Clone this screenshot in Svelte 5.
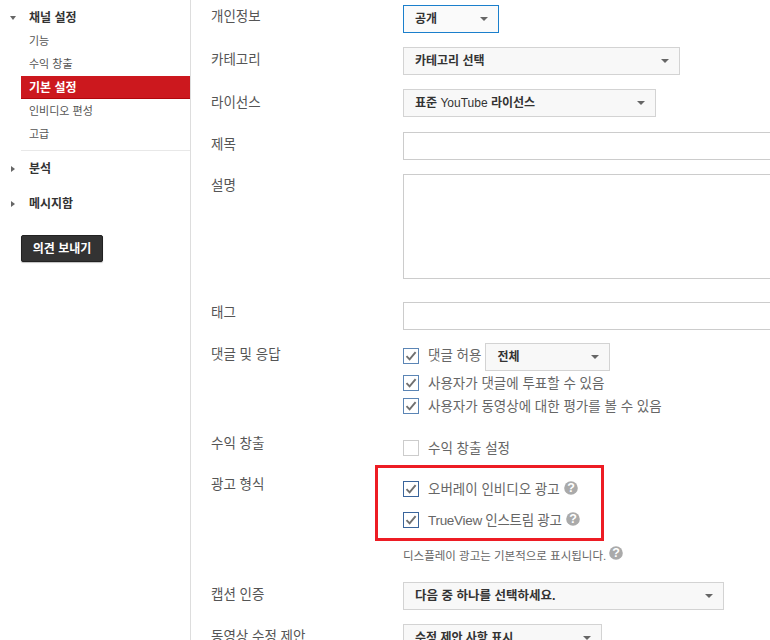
<script>
  const channelItems = [
    { label: "기능" },
    { label: "수익 창출" },
    { label: "기본 설정", active: true },
    { label: "인비디오 편성" },
    { label: "고급" }
  ];
  const voteOptions = [
    "사용자가 댓글에 투표할 수 있음",
    "사용자가 동영상에 대한 평가를 볼 수 있음"
  ];
</script>

{#snippet check(on, extra = "")}
  <span class="box {extra}" class:on>
    {#if on}
      <svg viewBox="0 0 16 16" width="16" height="16"><path d="M3.5 8.2 6.6 11.4 12.6 4.2" fill="none" stroke="#707070" stroke-width="1.9" /></svg>
    {/if}
  </span>
{/snippet}

{#snippet help()}
  <svg class="help" viewBox="0 0 14 14" width="14" height="14">
    <circle cx="7" cy="7" r="6.8" fill="#aaa" />
    <text x="7" y="11.4" text-anchor="middle">?</text>
  </svg>
{/snippet}

<div class="page">
  <aside class="side">
    <div class="head first"><i class="tri down"></i>채널 설정</div>
    <ul>
      {#each channelItems as item}
        <li class:active={item.active}>{item.label}</li>
      {/each}
    </ul>
    <div class="head sep"><i class="tri"></i>분석</div>
    <div class="head msg"><i class="tri"></i>메시지함</div>
    <button class="feedback">의견 보내기</button>
  </aside>

  <main class="form">
    <div class="row r-privacy">
      <div class="label">개인정보</div>
      <div class="select focus w-privacy"><b>공개</b><i class="caret"></i></div>
    </div>
    <div class="row r-cat">
      <div class="label">카테고리</div>
      <div class="select w-cat"><b>카테고리 선택</b><i class="caret"></i></div>
    </div>
    <div class="row r-lic">
      <div class="label">라이선스</div>
      <div class="select w-lic"><b>표준 <span class="yt">YouTube</span> 라이선스</b><i class="caret"></i></div>
    </div>
    <div class="row r-title">
      <div class="label">제목</div>
      <div class="input"></div>
    </div>
    <div class="row r-desc">
      <div class="label">설명</div>
      <div class="input area"></div>
    </div>
    <div class="row r-tag">
      <div class="label">태그</div>
      <div class="input"></div>
    </div>
    <div class="row r-comments">
      <div class="label">댓글 및 응답</div>
      <div class="stack">
        <div class="opt allow">
          {@render check(true)}
          <span>댓글 허용</span>
          <div class="select w-all"><b>전체</b><i class="caret"></i></div>
        </div>
        {#each voteOptions as text}
          <div class="opt vote">{@render check(true)}<span>{text}</span></div>
        {/each}
      </div>
    </div>
    <div class="row r-money">
      <div class="label">수익 창출</div>
      <div class="opt">{@render check(false)}<span>수익 창출 설정</span></div>
    </div>
    <div class="row r-ads">
      <div class="label">광고 형식</div>
      <div class="stack">
        <div class="opt ad">{@render check(true, "strong")}<span>오버레이 인비디오 광고</span>{@render help()}</div>
        <div class="opt ad second">{@render check(true, "strong")}<span>TrueView 인스트림 광고</span>{@render help()}</div>
        <div class="note">디스플레이 광고는 기본적으로 표시됩니다. {@render help()}</div>
      </div>
      <div class="redbox"></div>
    </div>
    <div class="row r-cap">
      <div class="label">캡션 인증</div>
      <div class="select w-cap"><b>다음 중 하나를 선택하세요.</b><i class="caret"></i></div>
    </div>
    <div class="row r-edit">
      <div class="label">동영상 수정 제안</div>
      <div class="select w-edit"><b>수정 제안 사항 표시</b><i class="caret"></i></div>
    </div>
  </main>
</div>

<style>
  :global(body) {
    margin: 0;
    background: #fff;
    overflow: hidden;
  }

  .page {
    display: flex;
    width: 770px;
    height: 640px;
    overflow: hidden;
    font-family: "Liberation Sans", "Noto Sans CJK KR", sans-serif;
    font-size: 12px;
    color: #555;
  }

  .side {
    flex: none;
    box-sizing: border-box;
    width: 191px;
    height: 640px;
    padding-left: 21px;
    border-right: 1px solid #ddd;
  }

  .head {
    position: relative;
    padding-left: 8px;
    font-weight: bold;
    color: #333;
    line-height: 16px;
  }
  .head.first { margin-top: 10px; }
  .head.sep {
    margin-top: 4px;
    padding-top: 10px;
    border-top: 1px solid #e8e8e8;
  }
  .head.msg { margin-top: 19px; }

  .tri {
    position: absolute;
    left: -10px;
    top: 5px;
    border-style: solid;
    border-width: 3px 0 3px 4px;
    border-color: transparent transparent transparent #666;
  }
  .head.sep .tri { top: 15px; }
  .tri.down {
    top: 6px;
    left: -11px;
    border-width: 4px 3px 0 3px;
    border-color: #666 transparent transparent transparent;
  }

  ul {
    list-style: none;
    margin: 4px 0 0;
    padding: 0;
  }
  li {
    height: 23.3px;
    line-height: 23px;
    padding-left: 8px;
    font-size: 11px;
  }
  li.active {
    margin: -1px 0 1px;
    background: #cc181e;
    border-bottom: 1px solid #b0060c;
    box-sizing: border-box;
    color: #fff;
    font-size: 12px;
    font-weight: bold;
    line-height: 24px;
  }

  .feedback {
    display: block;
    margin-top: 23px;
    width: 82px;
    height: 27px;
    padding: 0 0 3px;
    border: 1px solid #222;
    border-radius: 2px;
    background: #333;
    color: #fff;
    font: bold 12px "Liberation Sans", "Noto Sans CJK KR", sans-serif;
    box-shadow: 0 1px 1px rgba(0, 0, 0, 0.25);
  }

  .form {
    flex: 1;
    min-width: 0;
    padding-left: 20px;
  }

  .row {
    position: relative;
    display: flex;
    align-items: flex-start;
  }
  .label {
    flex: none;
    width: 192px;
    line-height: 18px;
    padding-top: 4px;
    font-size: 13.5px;
  }

  .r-privacy { margin-top: 5px; }
  .r-privacy .label { padding-top: 3px; }
  .r-cat { margin-top: 14px; }
  .r-lic { margin-top: 14px; }
  .r-lic .label { padding-top: 5px; }
  .r-title { margin-top: 15px; }
  .r-desc { margin-top: 14px; }
  .r-desc .label { padding-top: 3px; }
  .r-tag { margin-top: 23px; }
  .r-tag .label { padding-top: 2px; }
  .r-comments { margin-top: 13px; }
  .r-comments .label { padding-top: 3px; }
  .r-money { margin-top: 16px; }
  .r-money .label { padding-top: 5px; }
  .r-ads { margin-top: 15px; }
  .r-ads .label { padding-top: 5px; }
  .r-cap { margin-top: 19px; }
  .r-edit { margin-top: 14px; }

  .select {
    flex: none;
    position: relative;
    box-sizing: border-box;
    height: 28px;
    line-height: 26px;
    padding-left: 11px;
    border: 1px solid #d3d3d3;
    background: #f8f8f8;
    color: #333;
    font-size: 12px;
  }
  .select b { font-weight: bold; }
  .select .yt { font-weight: normal; color: #333; }
  .select.focus {
    border-color: #1b7fcc;
    background: #fafafa;
  }
  .caret {
    position: absolute;
    right: 10px;
    top: 11px;
    border-style: solid;
    border-width: 4px 4px 0 4px;
    border-color: #666 transparent transparent transparent;
  }

  .w-privacy { width: 96px; }
  .w-cat { width: 277px; }
  .w-lic { width: 253px; }
  .w-all { width: 125px; margin-left: 4px; }
  .w-cap { width: 321px; font-size: 12.5px; }
  .w-edit { width: 199px; }

  .input {
    flex: 1;
    box-sizing: border-box;
    height: 28px;
    margin-right: -4px;
    border: 1px solid #ccc;
    background: #fff;
  }
  .input.area { height: 105px; }

  .stack {
    display: flex;
    flex-direction: column;
    align-items: flex-start;
  }
  .opt {
    display: flex;
    align-items: center;
    color: #666;
    font-size: 13.5px;
  }
  .opt > span:last-of-type {
    margin-left: 9px;
    margin-bottom: 2px;
  }
  .opt.allow { height: 28px; align-items: flex-start; }
  .opt.allow .box { margin-top: 5px; }
  .opt.allow > span:last-of-type { line-height: 26px; margin-bottom: 0; }
  .opt.vote { height: 16px; margin-top: 4px; }
  .opt.vote + .opt.vote { margin-top: 7px; }
  .opt.ad { height: 16px; margin-top: 10px; }
  .opt.ad.second { margin-top: 15px; letter-spacing: -0.3px; }
  .r-money .opt { height: 16px; margin-top: 10px; }

  .box {
    flex: none;
    box-sizing: border-box;
    display: block;
    width: 16px;
    height: 16px;
    border: 1px solid #ccc;
    background: #fff;
  }
  .box.on { border-color: #5b85b5; }
  .box.strong { border-color: #3a659c; }
  .box svg {
    display: block;
    margin: -1px;
  }

  .help {
    flex: none;
    margin-left: 4px;
    margin-top: -3px;
  }
  .help text {
    fill: #fff;
    font: bold 12.5px "Liberation Sans", sans-serif;
  }

  .note {
    display: flex;
    align-items: center;
    margin-top: 19px;
    height: 16px;
    font-size: 11.5px;
    color: #666;
    white-space: pre;
  }
  .note .help {
    margin-left: 0;
    margin-top: -4px;
  }

  .redbox {
    position: absolute;
    left: 164px;
    top: -6px;
    width: 223px;
    height: 70px;
    border: 3px solid #ed1c24;
    pointer-events: none;
  }
</style>
